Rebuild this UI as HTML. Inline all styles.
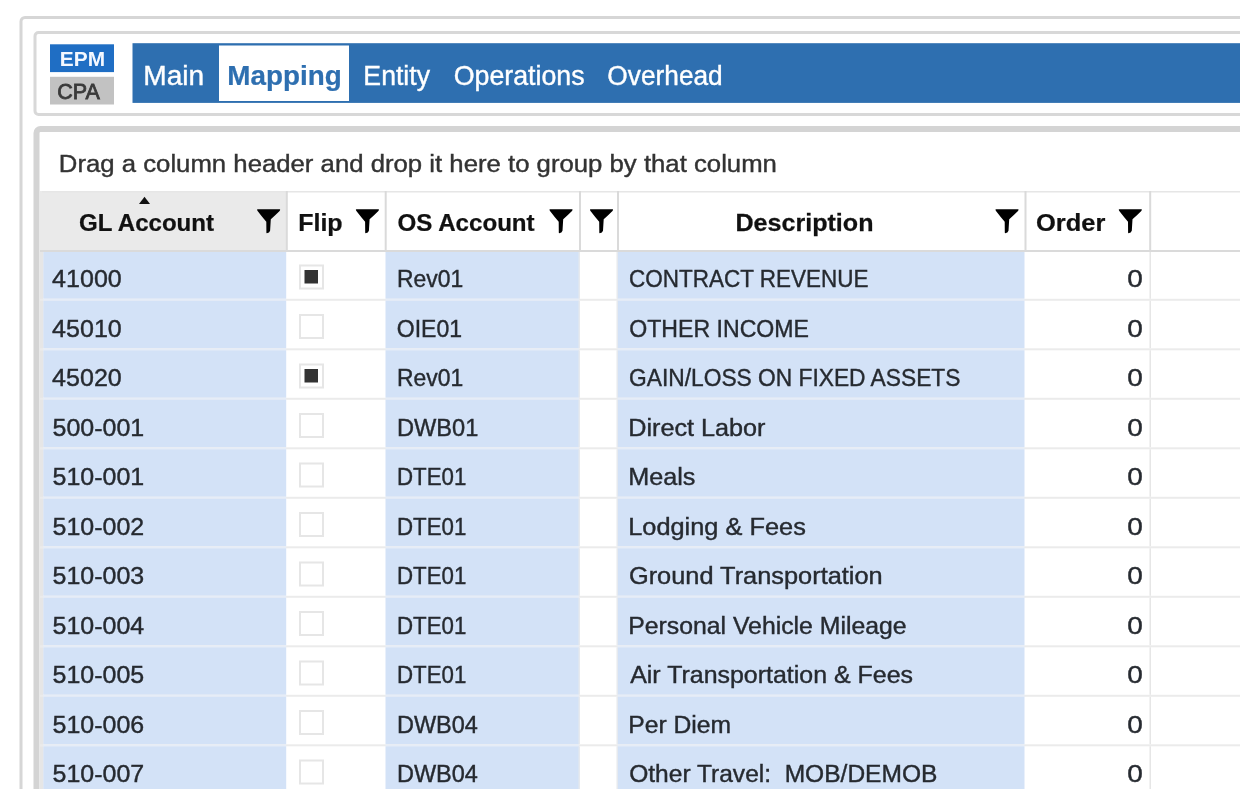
<!DOCTYPE html>
<html><head><meta charset="utf-8">
<style>html,body{margin:0;padding:0;}body{width:1240px;height:789px;overflow:hidden;background:#fff;position:relative;font-family:"Liberation Sans",sans-serif;}</style>
</head><body>
<div style="position:absolute;left:0;top:0;width:1240px;height:789px;will-change:transform"><svg width="1240" height="789" viewBox="0 0 1240 789" style="display:block" font-family="Liberation Sans, sans-serif">
<rect x="21" y="17.5" width="1400" height="1000" rx="4" fill="none" stroke="#d6d6d6" stroke-width="3"/>
<rect x="35" y="32.5" width="1400" height="82" rx="3.5" fill="none" stroke="#d8d8d8" stroke-width="3"/>
<rect x="36.5" y="129" width="1400" height="1000" rx="4" fill="none" stroke="#d4d4d4" stroke-width="6"/>
<rect x="50" y="44.3" width="64" height="27.8" fill="#1f6ec4"/>
<rect x="50" y="76.8" width="64" height="27.7" fill="#c2c2c2"/>
<text transform="translate(59.85 66.30) scale(0.9948 1)" font-size="21" font-weight="bold" fill="#f4f8ff" xml:space="preserve">EPM</text>
<text stroke="#3a3a3a" stroke-width="0.8" transform="translate(57.13 99.00) scale(1.0000 1)" font-size="21.5" fill="#3a3a3a" xml:space="preserve">CPA</text>
<rect x="132.5" y="43.2" width="1200" height="59.7" fill="#2e6fb0"/>
<rect x="219" y="45.5" width="130" height="55.5" fill="#fff"/>
<text stroke="#fff" stroke-width="0.4" transform="translate(143.25 85.30) scale(1.0039 1)" font-size="28" fill="#fff" xml:space="preserve">Main</text>
<text stroke="#2e6fb0" stroke-width="0.25" transform="translate(227.33 85.30) scale(0.9937 1)" font-size="28" font-weight="bold" fill="#2e6fb0" xml:space="preserve">Mapping</text>
<text stroke="#fff" stroke-width="0.4" transform="translate(363.37 85.30) scale(0.9515 1)" font-size="28" fill="#fff" xml:space="preserve">Entity</text>
<text stroke="#fff" stroke-width="0.4" transform="translate(453.73 85.30) scale(0.9563 1)" font-size="28" fill="#fff" xml:space="preserve">Operations</text>
<text stroke="#fff" stroke-width="0.4" transform="translate(607.35 85.30) scale(0.9387 1)" font-size="28" fill="#fff" xml:space="preserve">Overhead</text>
<text stroke="#333" stroke-width="0.4" transform="translate(58.84 172.00) scale(1.0727 1)" font-size="24" fill="#333" xml:space="preserve">Drag a column header and drop it here to group by that column</text>
<rect x="40" y="191" width="246.8" height="60" fill="#eaeaea"/>
<rect x="42" y="191" width="1200" height="1.5" fill="#e6e6e6"/>
<rect x="285.8" y="191" width="2" height="60" fill="#dadada"/>
<rect x="384.7" y="191" width="2" height="60" fill="#dadada"/>
<rect x="579" y="191" width="2" height="60" fill="#dadada"/>
<rect x="617" y="191" width="2" height="60" fill="#dadada"/>
<rect x="1024.5" y="191" width="2" height="60" fill="#dadada"/>
<rect x="1149.2" y="191" width="2" height="60" fill="#dadada"/>
<rect x="40" y="250" width="1200" height="2" fill="#dadada"/>
<text stroke="#111" stroke-width="0.25" transform="translate(79.04 231.30) scale(1.0032 1)" font-size="24" font-weight="bold" fill="#111" xml:space="preserve">GL Account</text>
<text stroke="#111" stroke-width="0.25" transform="translate(298.20 231.30) scale(1.0414 1)" font-size="24" font-weight="bold" fill="#111" xml:space="preserve">Flip</text>
<text stroke="#111" stroke-width="0.25" transform="translate(397.54 231.30) scale(1.0051 1)" font-size="24" font-weight="bold" fill="#111" xml:space="preserve">OS Account</text>
<text stroke="#111" stroke-width="0.25" transform="translate(735.49 231.30) scale(1.0455 1)" font-size="24" font-weight="bold" fill="#111" xml:space="preserve">Description</text>
<text stroke="#111" stroke-width="0.25" transform="translate(1035.98 231.30) scale(1.0612 1)" font-size="24" font-weight="bold" fill="#111" xml:space="preserve">Order</text>
<path d="M139 204L144.5 196.8L150 204Z" fill="#111"/>
<path transform="translate(257.1 209.2)" d="M0.5 0H22.6Q23.3 0 23 0.9L22.5 1.7Q18 6.2 13.7 10L13 21.6Q12.4 23.6 9.7 24.1Q9.3 24 9.3 23.4L9.2 12.6Q5 7.5 0.5 1.7L0 0.9Q-0.2 0 0.5 0Z" fill="#000"/>
<path transform="translate(355.9 209.2)" d="M0.5 0H22.6Q23.3 0 23 0.9L22.5 1.7Q18 6.2 13.7 10L13 21.6Q12.4 23.6 9.7 24.1Q9.3 24 9.3 23.4L9.2 12.6Q5 7.5 0.5 1.7L0 0.9Q-0.2 0 0.5 0Z" fill="#000"/>
<path transform="translate(549.5 209.2)" d="M0.5 0H22.6Q23.3 0 23 0.9L22.5 1.7Q18 6.2 13.7 10L13 21.6Q12.4 23.6 9.7 24.1Q9.3 24 9.3 23.4L9.2 12.6Q5 7.5 0.5 1.7L0 0.9Q-0.2 0 0.5 0Z" fill="#000"/>
<path transform="translate(590 209.2)" d="M0.5 0H22.6Q23.3 0 23 0.9L22.5 1.7Q18 6.2 13.7 10L13 21.6Q12.4 23.6 9.7 24.1Q9.3 24 9.3 23.4L9.2 12.6Q5 7.5 0.5 1.7L0 0.9Q-0.2 0 0.5 0Z" fill="#000"/>
<path transform="translate(995.5 209.2)" d="M0.5 0H22.6Q23.3 0 23 0.9L22.5 1.7Q18 6.2 13.7 10L13 21.6Q12.4 23.6 9.7 24.1Q9.3 24 9.3 23.4L9.2 12.6Q5 7.5 0.5 1.7L0 0.9Q-0.2 0 0.5 0Z" fill="#000"/>
<path transform="translate(1118.8 209.2)" d="M0.5 0H22.6Q23.3 0 23 0.9L22.5 1.7Q18 6.2 13.7 10L13 21.6Q12.4 23.6 9.7 24.1Q9.3 24 9.3 23.4L9.2 12.6Q5 7.5 0.5 1.7L0 0.9Q-0.2 0 0.5 0Z" fill="#000"/>
<rect x="43.2" y="252" width="243.0" height="46.8" fill="#d3e2f7"/>
<rect x="385.5" y="252" width="193.5" height="46.8" fill="#d3e2f7"/>
<rect x="617.5" y="252" width="407.0" height="46.8" fill="#d3e2f7"/>
<rect x="40" y="252" width="3.2" height="48.8" fill="#e6e6e6"/>
<rect x="578.5" y="252" width="1.5" height="46.8" fill="#e6e9ee"/>
<rect x="616.5" y="252" width="1.5" height="46.8" fill="#e6e9ee"/>
<rect x="1149.5" y="252" width="1.5" height="46.8" fill="#e6e6e6"/>
<rect x="40" y="298.8" width="1200" height="2" fill="#ebebeb"/>
<rect x="43.2" y="298.8" width="243.0" height="2" fill="#e6edf7"/>
<rect x="385.5" y="298.8" width="193.5" height="2" fill="#e6edf7"/>
<rect x="617.5" y="298.8" width="407.0" height="2" fill="#e6edf7"/>
<text stroke="#262a30" stroke-width="0.4" transform="translate(52.10 287.10) scale(1.0445 1)" font-size="24" fill="#262a30" xml:space="preserve">41000</text>
<text stroke="#262a30" stroke-width="0.4" transform="translate(396.97 287.10) scale(0.9556 1)" font-size="24" fill="#262a30" xml:space="preserve">Rev01</text>
<text stroke="#262a30" stroke-width="0.4" transform="translate(629.08 287.10) scale(0.9369 1)" font-size="24" fill="#262a30" xml:space="preserve">CONTRACT REVENUE</text>
<text stroke="#262a30" stroke-width="0.4" transform="translate(1127.26 287.10) scale(1.1650 1)" font-size="24" fill="#262a30" xml:space="preserve">0</text>
<rect x="300" y="265.50" width="23" height="23" fill="#fff" stroke="#e6e6e6" stroke-width="2"/>
<rect x="304.5" y="270.0" width="13.5" height="13.5" fill="#333"/>
<rect x="43.2" y="300.8" width="243.0" height="47.5" fill="#d3e2f7"/>
<rect x="385.5" y="300.8" width="193.5" height="47.5" fill="#d3e2f7"/>
<rect x="617.5" y="300.8" width="407.0" height="47.5" fill="#d3e2f7"/>
<rect x="40" y="300.8" width="3.2" height="49.5" fill="#e6e6e6"/>
<rect x="578.5" y="300.8" width="1.5" height="47.5" fill="#e6e9ee"/>
<rect x="616.5" y="300.8" width="1.5" height="47.5" fill="#e6e9ee"/>
<rect x="1149.5" y="300.8" width="1.5" height="47.5" fill="#e6e6e6"/>
<rect x="40" y="348.3" width="1200" height="2" fill="#ebebeb"/>
<rect x="43.2" y="348.3" width="243.0" height="2" fill="#e6edf7"/>
<rect x="385.5" y="348.3" width="193.5" height="2" fill="#e6edf7"/>
<rect x="617.5" y="348.3" width="407.0" height="2" fill="#e6edf7"/>
<text stroke="#262a30" stroke-width="0.4" transform="translate(52.10 336.60) scale(1.0445 1)" font-size="24" fill="#262a30" xml:space="preserve">45010</text>
<text stroke="#262a30" stroke-width="0.4" transform="translate(396.78 336.60) scale(0.9595 1)" font-size="24" fill="#262a30" xml:space="preserve">OIE01</text>
<text stroke="#262a30" stroke-width="0.4" transform="translate(629.27 336.60) scale(0.9636 1)" font-size="24" fill="#262a30" xml:space="preserve">OTHER INCOME</text>
<text stroke="#262a30" stroke-width="0.4" transform="translate(1127.26 336.60) scale(1.1650 1)" font-size="24" fill="#262a30" xml:space="preserve">0</text>
<rect x="300" y="315.00" width="23" height="23" fill="#fff" stroke="#e6e6e6" stroke-width="2"/>
<rect x="43.2" y="350.3" width="243.0" height="47.5" fill="#d3e2f7"/>
<rect x="385.5" y="350.3" width="193.5" height="47.5" fill="#d3e2f7"/>
<rect x="617.5" y="350.3" width="407.0" height="47.5" fill="#d3e2f7"/>
<rect x="40" y="350.3" width="3.2" height="49.5" fill="#e6e6e6"/>
<rect x="578.5" y="350.3" width="1.5" height="47.5" fill="#e6e9ee"/>
<rect x="616.5" y="350.3" width="1.5" height="47.5" fill="#e6e9ee"/>
<rect x="1149.5" y="350.3" width="1.5" height="47.5" fill="#e6e6e6"/>
<rect x="40" y="397.8" width="1200" height="2" fill="#ebebeb"/>
<rect x="43.2" y="397.8" width="243.0" height="2" fill="#e6edf7"/>
<rect x="385.5" y="397.8" width="193.5" height="2" fill="#e6edf7"/>
<rect x="617.5" y="397.8" width="407.0" height="2" fill="#e6edf7"/>
<text stroke="#262a30" stroke-width="0.4" transform="translate(52.10 386.10) scale(1.0445 1)" font-size="24" fill="#262a30" xml:space="preserve">45020</text>
<text stroke="#262a30" stroke-width="0.4" transform="translate(396.97 386.10) scale(0.9556 1)" font-size="24" fill="#262a30" xml:space="preserve">Rev01</text>
<text stroke="#262a30" stroke-width="0.4" transform="translate(629.06 386.10) scale(0.9493 1)" font-size="24" fill="#262a30" xml:space="preserve">GAIN/LOSS ON FIXED ASSETS</text>
<text stroke="#262a30" stroke-width="0.4" transform="translate(1127.26 386.10) scale(1.1650 1)" font-size="24" fill="#262a30" xml:space="preserve">0</text>
<rect x="300" y="364.50" width="23" height="23" fill="#fff" stroke="#e6e6e6" stroke-width="2"/>
<rect x="304.5" y="369.0" width="13.5" height="13.5" fill="#333"/>
<rect x="43.2" y="399.8" width="243.0" height="47.5" fill="#d3e2f7"/>
<rect x="385.5" y="399.8" width="193.5" height="47.5" fill="#d3e2f7"/>
<rect x="617.5" y="399.8" width="407.0" height="47.5" fill="#d3e2f7"/>
<rect x="40" y="399.8" width="3.2" height="49.5" fill="#e6e6e6"/>
<rect x="578.5" y="399.8" width="1.5" height="47.5" fill="#e6e9ee"/>
<rect x="616.5" y="399.8" width="1.5" height="47.5" fill="#e6e9ee"/>
<rect x="1149.5" y="399.8" width="1.5" height="47.5" fill="#e6e6e6"/>
<rect x="40" y="447.3" width="1200" height="2" fill="#ebebeb"/>
<rect x="43.2" y="447.3" width="243.0" height="2" fill="#e6edf7"/>
<rect x="385.5" y="447.3" width="193.5" height="2" fill="#e6edf7"/>
<rect x="617.5" y="447.3" width="407.0" height="2" fill="#e6edf7"/>
<text stroke="#262a30" stroke-width="0.4" transform="translate(52.60 435.60) scale(1.0406 1)" font-size="24" fill="#262a30" xml:space="preserve">500-001</text>
<text stroke="#262a30" stroke-width="0.4" transform="translate(396.91 435.60) scale(0.9854 1)" font-size="24" fill="#262a30" xml:space="preserve">DWB01</text>
<text stroke="#262a30" stroke-width="0.4" transform="translate(628.18 435.60) scale(1.0507 1)" font-size="24" fill="#262a30" xml:space="preserve">Direct Labor</text>
<text stroke="#262a30" stroke-width="0.4" transform="translate(1127.26 435.60) scale(1.1650 1)" font-size="24" fill="#262a30" xml:space="preserve">0</text>
<rect x="300" y="414.00" width="23" height="23" fill="#fff" stroke="#e6e6e6" stroke-width="2"/>
<rect x="43.2" y="449.3" width="243.0" height="47.5" fill="#d3e2f7"/>
<rect x="385.5" y="449.3" width="193.5" height="47.5" fill="#d3e2f7"/>
<rect x="617.5" y="449.3" width="407.0" height="47.5" fill="#d3e2f7"/>
<rect x="40" y="449.3" width="3.2" height="49.5" fill="#e6e6e6"/>
<rect x="578.5" y="449.3" width="1.5" height="47.5" fill="#e6e9ee"/>
<rect x="616.5" y="449.3" width="1.5" height="47.5" fill="#e6e9ee"/>
<rect x="1149.5" y="449.3" width="1.5" height="47.5" fill="#e6e6e6"/>
<rect x="40" y="496.8" width="1200" height="2" fill="#ebebeb"/>
<rect x="43.2" y="496.8" width="243.0" height="2" fill="#e6edf7"/>
<rect x="385.5" y="496.8" width="193.5" height="2" fill="#e6edf7"/>
<rect x="617.5" y="496.8" width="407.0" height="2" fill="#e6edf7"/>
<text stroke="#262a30" stroke-width="0.4" transform="translate(52.60 485.10) scale(1.0406 1)" font-size="24" fill="#262a30" xml:space="preserve">510-001</text>
<text stroke="#262a30" stroke-width="0.4" transform="translate(397.02 485.10) scale(0.9293 1)" font-size="24" fill="#262a30" xml:space="preserve">DTE01</text>
<text stroke="#262a30" stroke-width="0.4" transform="translate(628.18 485.10) scale(1.0508 1)" font-size="24" fill="#262a30" xml:space="preserve">Meals</text>
<text stroke="#262a30" stroke-width="0.4" transform="translate(1127.26 485.10) scale(1.1650 1)" font-size="24" fill="#262a30" xml:space="preserve">0</text>
<rect x="300" y="463.50" width="23" height="23" fill="#fff" stroke="#e6e6e6" stroke-width="2"/>
<rect x="43.2" y="498.8" width="243.0" height="47.5" fill="#d3e2f7"/>
<rect x="385.5" y="498.8" width="193.5" height="47.5" fill="#d3e2f7"/>
<rect x="617.5" y="498.8" width="407.0" height="47.5" fill="#d3e2f7"/>
<rect x="40" y="498.8" width="3.2" height="49.5" fill="#e6e6e6"/>
<rect x="578.5" y="498.8" width="1.5" height="47.5" fill="#e6e9ee"/>
<rect x="616.5" y="498.8" width="1.5" height="47.5" fill="#e6e9ee"/>
<rect x="1149.5" y="498.8" width="1.5" height="47.5" fill="#e6e6e6"/>
<rect x="40" y="546.3" width="1200" height="2" fill="#ebebeb"/>
<rect x="43.2" y="546.3" width="243.0" height="2" fill="#e6edf7"/>
<rect x="385.5" y="546.3" width="193.5" height="2" fill="#e6edf7"/>
<rect x="617.5" y="546.3" width="407.0" height="2" fill="#e6edf7"/>
<text stroke="#262a30" stroke-width="0.4" transform="translate(52.60 534.60) scale(1.0406 1)" font-size="24" fill="#262a30" xml:space="preserve">510-002</text>
<text stroke="#262a30" stroke-width="0.4" transform="translate(397.02 534.60) scale(0.9293 1)" font-size="24" fill="#262a30" xml:space="preserve">DTE01</text>
<text stroke="#262a30" stroke-width="0.4" transform="translate(628.17 534.60) scale(1.0575 1)" font-size="24" fill="#262a30" xml:space="preserve">Lodging &amp; Fees</text>
<text stroke="#262a30" stroke-width="0.4" transform="translate(1127.26 534.60) scale(1.1650 1)" font-size="24" fill="#262a30" xml:space="preserve">0</text>
<rect x="300" y="513.00" width="23" height="23" fill="#fff" stroke="#e6e6e6" stroke-width="2"/>
<rect x="43.2" y="548.3" width="243.0" height="47.5" fill="#d3e2f7"/>
<rect x="385.5" y="548.3" width="193.5" height="47.5" fill="#d3e2f7"/>
<rect x="617.5" y="548.3" width="407.0" height="47.5" fill="#d3e2f7"/>
<rect x="40" y="548.3" width="3.2" height="49.5" fill="#e6e6e6"/>
<rect x="578.5" y="548.3" width="1.5" height="47.5" fill="#e6e9ee"/>
<rect x="616.5" y="548.3" width="1.5" height="47.5" fill="#e6e9ee"/>
<rect x="1149.5" y="548.3" width="1.5" height="47.5" fill="#e6e6e6"/>
<rect x="40" y="595.8" width="1200" height="2" fill="#ebebeb"/>
<rect x="43.2" y="595.8" width="243.0" height="2" fill="#e6edf7"/>
<rect x="385.5" y="595.8" width="193.5" height="2" fill="#e6edf7"/>
<rect x="617.5" y="595.8" width="407.0" height="2" fill="#e6edf7"/>
<text stroke="#262a30" stroke-width="0.4" transform="translate(52.60 584.10) scale(1.0406 1)" font-size="24" fill="#262a30" xml:space="preserve">510-003</text>
<text stroke="#262a30" stroke-width="0.4" transform="translate(397.02 584.10) scale(0.9293 1)" font-size="24" fill="#262a30" xml:space="preserve">DTE01</text>
<text stroke="#262a30" stroke-width="0.4" transform="translate(628.93 584.10) scale(1.0570 1)" font-size="24" fill="#262a30" xml:space="preserve">Ground Transportation</text>
<text stroke="#262a30" stroke-width="0.4" transform="translate(1127.26 584.10) scale(1.1650 1)" font-size="24" fill="#262a30" xml:space="preserve">0</text>
<rect x="300" y="562.50" width="23" height="23" fill="#fff" stroke="#e6e6e6" stroke-width="2"/>
<rect x="43.2" y="597.8" width="243.0" height="47.5" fill="#d3e2f7"/>
<rect x="385.5" y="597.8" width="193.5" height="47.5" fill="#d3e2f7"/>
<rect x="617.5" y="597.8" width="407.0" height="47.5" fill="#d3e2f7"/>
<rect x="40" y="597.8" width="3.2" height="49.5" fill="#e6e6e6"/>
<rect x="578.5" y="597.8" width="1.5" height="47.5" fill="#e6e9ee"/>
<rect x="616.5" y="597.8" width="1.5" height="47.5" fill="#e6e9ee"/>
<rect x="1149.5" y="597.8" width="1.5" height="47.5" fill="#e6e6e6"/>
<rect x="40" y="645.3" width="1200" height="2" fill="#ebebeb"/>
<rect x="43.2" y="645.3" width="243.0" height="2" fill="#e6edf7"/>
<rect x="385.5" y="645.3" width="193.5" height="2" fill="#e6edf7"/>
<rect x="617.5" y="645.3" width="407.0" height="2" fill="#e6edf7"/>
<text stroke="#262a30" stroke-width="0.4" transform="translate(52.60 633.60) scale(1.0406 1)" font-size="24" fill="#262a30" xml:space="preserve">510-004</text>
<text stroke="#262a30" stroke-width="0.4" transform="translate(397.02 633.60) scale(0.9293 1)" font-size="24" fill="#262a30" xml:space="preserve">DTE01</text>
<text stroke="#262a30" stroke-width="0.4" transform="translate(628.22 633.60) scale(1.0333 1)" font-size="24" fill="#262a30" xml:space="preserve">Personal Vehicle Mileage</text>
<text stroke="#262a30" stroke-width="0.4" transform="translate(1127.26 633.60) scale(1.1650 1)" font-size="24" fill="#262a30" xml:space="preserve">0</text>
<rect x="300" y="612.00" width="23" height="23" fill="#fff" stroke="#e6e6e6" stroke-width="2"/>
<rect x="43.2" y="647.3" width="243.0" height="47.5" fill="#d3e2f7"/>
<rect x="385.5" y="647.3" width="193.5" height="47.5" fill="#d3e2f7"/>
<rect x="617.5" y="647.3" width="407.0" height="47.5" fill="#d3e2f7"/>
<rect x="40" y="647.3" width="3.2" height="49.5" fill="#e6e6e6"/>
<rect x="578.5" y="647.3" width="1.5" height="47.5" fill="#e6e9ee"/>
<rect x="616.5" y="647.3" width="1.5" height="47.5" fill="#e6e9ee"/>
<rect x="1149.5" y="647.3" width="1.5" height="47.5" fill="#e6e6e6"/>
<rect x="40" y="694.8" width="1200" height="2" fill="#ebebeb"/>
<rect x="43.2" y="694.8" width="243.0" height="2" fill="#e6edf7"/>
<rect x="385.5" y="694.8" width="193.5" height="2" fill="#e6edf7"/>
<rect x="617.5" y="694.8" width="407.0" height="2" fill="#e6edf7"/>
<text stroke="#262a30" stroke-width="0.4" transform="translate(52.60 683.10) scale(1.0406 1)" font-size="24" fill="#262a30" xml:space="preserve">510-005</text>
<text stroke="#262a30" stroke-width="0.4" transform="translate(397.02 683.10) scale(0.9293 1)" font-size="24" fill="#262a30" xml:space="preserve">DTE01</text>
<text stroke="#262a30" stroke-width="0.4" transform="translate(630.20 683.10) scale(1.0396 1)" font-size="24" fill="#262a30" xml:space="preserve">Air Transportation &amp; Fees</text>
<text stroke="#262a30" stroke-width="0.4" transform="translate(1127.26 683.10) scale(1.1650 1)" font-size="24" fill="#262a30" xml:space="preserve">0</text>
<rect x="300" y="661.50" width="23" height="23" fill="#fff" stroke="#e6e6e6" stroke-width="2"/>
<rect x="43.2" y="696.8" width="243.0" height="47.5" fill="#d3e2f7"/>
<rect x="385.5" y="696.8" width="193.5" height="47.5" fill="#d3e2f7"/>
<rect x="617.5" y="696.8" width="407.0" height="47.5" fill="#d3e2f7"/>
<rect x="40" y="696.8" width="3.2" height="49.5" fill="#e6e6e6"/>
<rect x="578.5" y="696.8" width="1.5" height="47.5" fill="#e6e9ee"/>
<rect x="616.5" y="696.8" width="1.5" height="47.5" fill="#e6e9ee"/>
<rect x="1149.5" y="696.8" width="1.5" height="47.5" fill="#e6e6e6"/>
<rect x="40" y="744.3" width="1200" height="2" fill="#ebebeb"/>
<rect x="43.2" y="744.3" width="243.0" height="2" fill="#e6edf7"/>
<rect x="385.5" y="744.3" width="193.5" height="2" fill="#e6edf7"/>
<rect x="617.5" y="744.3" width="407.0" height="2" fill="#e6edf7"/>
<text stroke="#262a30" stroke-width="0.4" transform="translate(52.60 732.60) scale(1.0406 1)" font-size="24" fill="#262a30" xml:space="preserve">510-006</text>
<text stroke="#262a30" stroke-width="0.4" transform="translate(396.92 732.60) scale(0.9795 1)" font-size="24" fill="#262a30" xml:space="preserve">DWB04</text>
<text stroke="#262a30" stroke-width="0.4" transform="translate(628.22 732.60) scale(1.0291 1)" font-size="24" fill="#262a30" xml:space="preserve">Per Diem</text>
<text stroke="#262a30" stroke-width="0.4" transform="translate(1127.26 732.60) scale(1.1650 1)" font-size="24" fill="#262a30" xml:space="preserve">0</text>
<rect x="300" y="711.00" width="23" height="23" fill="#fff" stroke="#e6e6e6" stroke-width="2"/>
<rect x="43.2" y="746.3" width="243.0" height="47.5" fill="#d3e2f7"/>
<rect x="385.5" y="746.3" width="193.5" height="47.5" fill="#d3e2f7"/>
<rect x="617.5" y="746.3" width="407.0" height="47.5" fill="#d3e2f7"/>
<rect x="40" y="746.3" width="3.2" height="49.5" fill="#e6e6e6"/>
<rect x="578.5" y="746.3" width="1.5" height="47.5" fill="#e6e9ee"/>
<rect x="616.5" y="746.3" width="1.5" height="47.5" fill="#e6e9ee"/>
<rect x="1149.5" y="746.3" width="1.5" height="47.5" fill="#e6e6e6"/>
<rect x="40" y="793.8" width="1200" height="2" fill="#ebebeb"/>
<rect x="43.2" y="793.8" width="243.0" height="2" fill="#e6edf7"/>
<rect x="385.5" y="793.8" width="193.5" height="2" fill="#e6edf7"/>
<rect x="617.5" y="793.8" width="407.0" height="2" fill="#e6edf7"/>
<text stroke="#262a30" stroke-width="0.4" transform="translate(52.60 782.10) scale(1.0406 1)" font-size="24" fill="#262a30" xml:space="preserve">510-007</text>
<text stroke="#262a30" stroke-width="0.4" transform="translate(396.92 782.10) scale(0.9795 1)" font-size="24" fill="#262a30" xml:space="preserve">DWB04</text>
<text stroke="#262a30" stroke-width="0.4" transform="translate(629.22 782.10) scale(1.0229 1)" font-size="24" fill="#262a30" xml:space="preserve">Other Travel: &#160;MOB/DEMOB</text>
<text stroke="#262a30" stroke-width="0.4" transform="translate(1127.26 782.10) scale(1.1650 1)" font-size="24" fill="#262a30" xml:space="preserve">0</text>
<rect x="300" y="760.50" width="23" height="23" fill="#fff" stroke="#e6e6e6" stroke-width="2"/>
</svg></div>
</body></html>
